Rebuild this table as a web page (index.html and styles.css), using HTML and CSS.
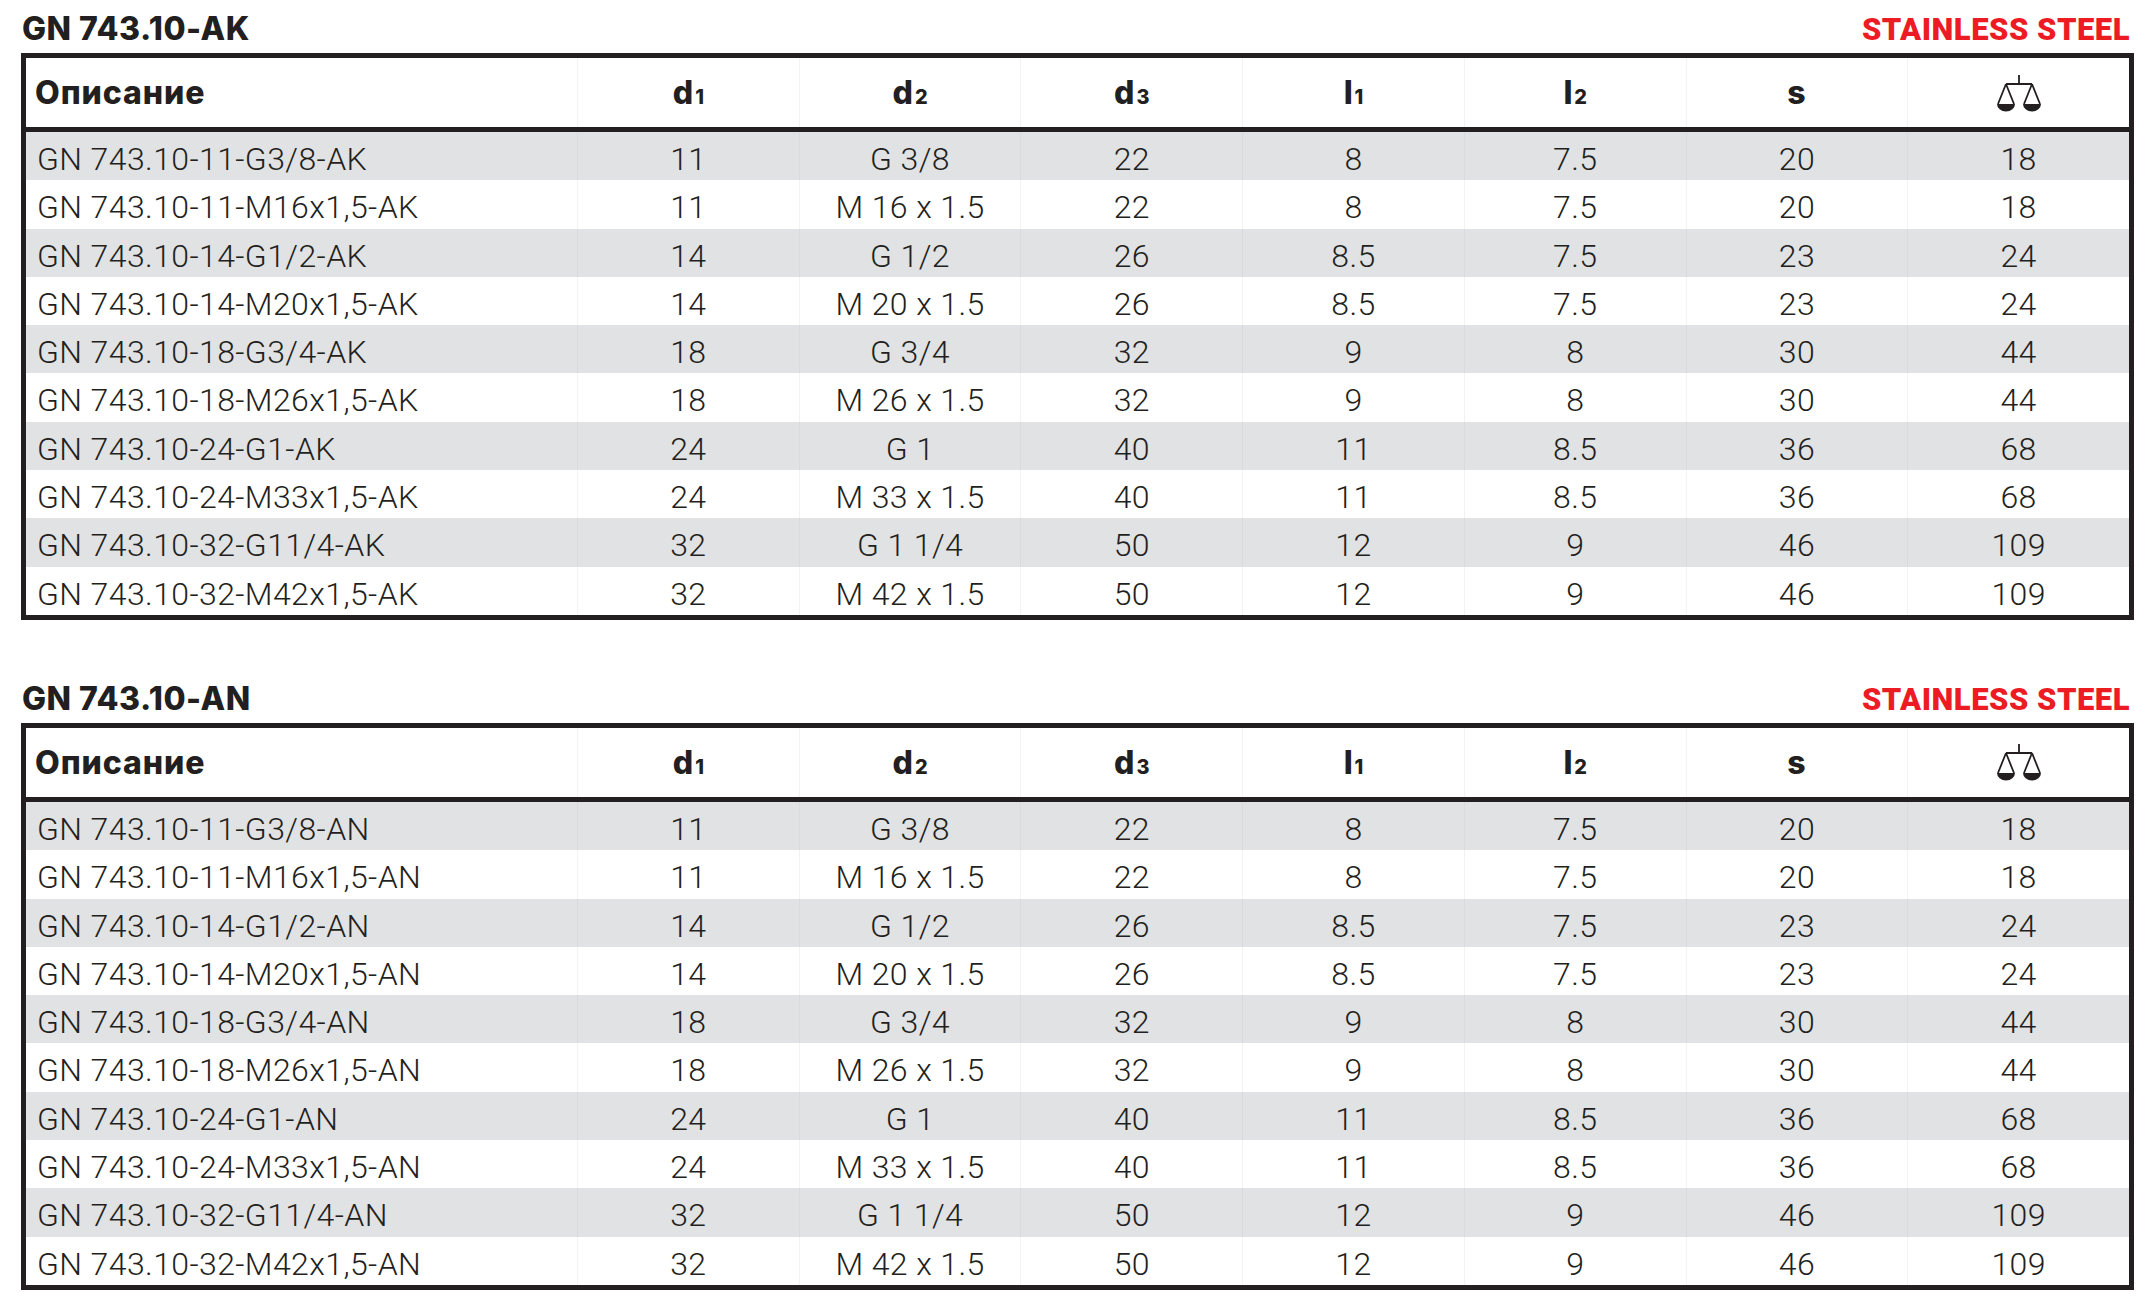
FILE: index.html
```html
<!DOCTYPE html>
<html lang="ru">
<head>
<meta charset="utf-8">
<title>GN 743.10</title>
<link rel="stylesheet" href="styles.css">
</head>
<body>
<div class="page">

<section class="section">
  <div class="sec-head">
    <h2 class="sec-title">GN 743.10-AK</h2>
    <span class="material">STAINLESS STEEL</span>
  </div>
  <div class="tbl">
    <div class="row head">
      <div class="cell first"><span class="h">Описание</span></div>
      <div class="cell"><span class="h">d<sub>1</sub></span></div>
      <div class="cell"><span class="h">d<sub>2</sub></span></div>
      <div class="cell"><span class="h">d<sub>3</sub></span></div>
      <div class="cell"><span class="h">l<sub>1</sub></span></div>
      <div class="cell"><span class="h">l<sub>2</sub></span></div>
      <div class="cell"><span class="h">s</span></div>
      <div class="cell"><svg class="scale" viewBox="0 0 44 37" width="44" height="37"><path d="M22 0V9M9 9H35M9 9L1 29M9 9L17 29M35 9L27 29M35 9L43 29" fill="none" stroke="#231f20" stroke-width="1.8"/><path d="M0 29H18A9 7.5 0 0 1 0 29Z M26 29H44A9 7.5 0 0 1 26 29Z" fill="#231f20"/></svg></div>
    </div>
    <div class="row"><div class="cell first">GN 743.10-11-G3/8-AK</div><div class="cell">11</div><div class="cell">G 3/8</div><div class="cell">22</div><div class="cell">8</div><div class="cell">7.5</div><div class="cell">20</div><div class="cell">18</div></div>
    <div class="row"><div class="cell first">GN 743.10-11-M16x1,5-AK</div><div class="cell">11</div><div class="cell">M 16 x 1.5</div><div class="cell">22</div><div class="cell">8</div><div class="cell">7.5</div><div class="cell">20</div><div class="cell">18</div></div>
    <div class="row"><div class="cell first">GN 743.10-14-G1/2-AK</div><div class="cell">14</div><div class="cell">G 1/2</div><div class="cell">26</div><div class="cell">8.5</div><div class="cell">7.5</div><div class="cell">23</div><div class="cell">24</div></div>
    <div class="row"><div class="cell first">GN 743.10-14-M20x1,5-AK</div><div class="cell">14</div><div class="cell">M 20 x 1.5</div><div class="cell">26</div><div class="cell">8.5</div><div class="cell">7.5</div><div class="cell">23</div><div class="cell">24</div></div>
    <div class="row"><div class="cell first">GN 743.10-18-G3/4-AK</div><div class="cell">18</div><div class="cell">G 3/4</div><div class="cell">32</div><div class="cell">9</div><div class="cell">8</div><div class="cell">30</div><div class="cell">44</div></div>
    <div class="row"><div class="cell first">GN 743.10-18-M26x1,5-AK</div><div class="cell">18</div><div class="cell">M 26 x 1.5</div><div class="cell">32</div><div class="cell">9</div><div class="cell">8</div><div class="cell">30</div><div class="cell">44</div></div>
    <div class="row"><div class="cell first">GN 743.10-24-G1-AK</div><div class="cell">24</div><div class="cell">G 1</div><div class="cell">40</div><div class="cell">11</div><div class="cell">8.5</div><div class="cell">36</div><div class="cell">68</div></div>
    <div class="row"><div class="cell first">GN 743.10-24-M33x1,5-AK</div><div class="cell">24</div><div class="cell">M 33 x 1.5</div><div class="cell">40</div><div class="cell">11</div><div class="cell">8.5</div><div class="cell">36</div><div class="cell">68</div></div>
    <div class="row"><div class="cell first">GN 743.10-32-G11/4-AK</div><div class="cell">32</div><div class="cell">G 1 1/4</div><div class="cell">50</div><div class="cell">12</div><div class="cell">9</div><div class="cell">46</div><div class="cell">109</div></div>
    <div class="row"><div class="cell first">GN 743.10-32-M42x1,5-AK</div><div class="cell">32</div><div class="cell">M 42 x 1.5</div><div class="cell">50</div><div class="cell">12</div><div class="cell">9</div><div class="cell">46</div><div class="cell">109</div></div>
  </div>
</section>

<section class="section">
  <div class="sec-head">
    <h2 class="sec-title">GN 743.10-AN</h2>
    <span class="material">STAINLESS STEEL</span>
  </div>
  <div class="tbl">
    <div class="row head">
      <div class="cell first"><span class="h">Описание</span></div>
      <div class="cell"><span class="h">d<sub>1</sub></span></div>
      <div class="cell"><span class="h">d<sub>2</sub></span></div>
      <div class="cell"><span class="h">d<sub>3</sub></span></div>
      <div class="cell"><span class="h">l<sub>1</sub></span></div>
      <div class="cell"><span class="h">l<sub>2</sub></span></div>
      <div class="cell"><span class="h">s</span></div>
      <div class="cell"><svg class="scale" viewBox="0 0 44 37" width="44" height="37"><path d="M22 0V9M9 9H35M9 9L1 29M9 9L17 29M35 9L27 29M35 9L43 29" fill="none" stroke="#231f20" stroke-width="1.8"/><path d="M0 29H18A9 7.5 0 0 1 0 29Z M26 29H44A9 7.5 0 0 1 26 29Z" fill="#231f20"/></svg></div>
    </div>
    <div class="row"><div class="cell first">GN 743.10-11-G3/8-AN</div><div class="cell">11</div><div class="cell">G 3/8</div><div class="cell">22</div><div class="cell">8</div><div class="cell">7.5</div><div class="cell">20</div><div class="cell">18</div></div>
    <div class="row"><div class="cell first">GN 743.10-11-M16x1,5-AN</div><div class="cell">11</div><div class="cell">M 16 x 1.5</div><div class="cell">22</div><div class="cell">8</div><div class="cell">7.5</div><div class="cell">20</div><div class="cell">18</div></div>
    <div class="row"><div class="cell first">GN 743.10-14-G1/2-AN</div><div class="cell">14</div><div class="cell">G 1/2</div><div class="cell">26</div><div class="cell">8.5</div><div class="cell">7.5</div><div class="cell">23</div><div class="cell">24</div></div>
    <div class="row"><div class="cell first">GN 743.10-14-M20x1,5-AN</div><div class="cell">14</div><div class="cell">M 20 x 1.5</div><div class="cell">26</div><div class="cell">8.5</div><div class="cell">7.5</div><div class="cell">23</div><div class="cell">24</div></div>
    <div class="row"><div class="cell first">GN 743.10-18-G3/4-AN</div><div class="cell">18</div><div class="cell">G 3/4</div><div class="cell">32</div><div class="cell">9</div><div class="cell">8</div><div class="cell">30</div><div class="cell">44</div></div>
    <div class="row"><div class="cell first">GN 743.10-18-M26x1,5-AN</div><div class="cell">18</div><div class="cell">M 26 x 1.5</div><div class="cell">32</div><div class="cell">9</div><div class="cell">8</div><div class="cell">30</div><div class="cell">44</div></div>
    <div class="row"><div class="cell first">GN 743.10-24-G1-AN</div><div class="cell">24</div><div class="cell">G 1</div><div class="cell">40</div><div class="cell">11</div><div class="cell">8.5</div><div class="cell">36</div><div class="cell">68</div></div>
    <div class="row"><div class="cell first">GN 743.10-24-M33x1,5-AN</div><div class="cell">24</div><div class="cell">M 33 x 1.5</div><div class="cell">40</div><div class="cell">11</div><div class="cell">8.5</div><div class="cell">36</div><div class="cell">68</div></div>
    <div class="row"><div class="cell first">GN 743.10-32-G11/4-AN</div><div class="cell">32</div><div class="cell">G 1 1/4</div><div class="cell">50</div><div class="cell">12</div><div class="cell">9</div><div class="cell">46</div><div class="cell">109</div></div>
    <div class="row"><div class="cell first">GN 743.10-32-M42x1,5-AN</div><div class="cell">32</div><div class="cell">M 42 x 1.5</div><div class="cell">50</div><div class="cell">12</div><div class="cell">9</div><div class="cell">46</div><div class="cell">109</div></div>
  </div>
</section>

</div>
</body>
</html>
```

FILE: styles.css
```css
html, body {
  margin: 0;
  padding: 0;
  background: #ffffff;
}

body {
  color: #231f20;
  font-family: Roboto, "Liberation Sans", sans-serif;
}

.page {
  padding-left: 21px;
  width: 2113px;
}

.section + .section {
  margin-top: 50px;
}

.sec-head {
  display: flex;
  justify-content: space-between;
  align-items: baseline;
  box-sizing: border-box;
  height: 53px;
  padding: 11px 4px 0 1px;
  line-height: 36px;
}

.sec-title {
  margin: 0;
  font-family: Inter, "Liberation Sans", sans-serif;
  font-weight: 800;
  font-size: 32px;
  letter-spacing: 0.5px;
}

.material {
  font-family: Roboto, "Liberation Sans", sans-serif;
  font-weight: 900;
  font-size: 31px;
  letter-spacing: 0.5px;
  color: #ed1c24;
}

.tbl {
  border: 5px solid #231f20;
  box-sizing: border-box;
  width: 2113px;
}

.row {
  display: grid;
  grid-template-columns: 551px repeat(7, 1fr);
  height: 48.3px;
}

.row:nth-child(even) {
  background: #e1e2e4;
}

.row.head {
  height: 74px;
  border-bottom: 5px solid #231f20;
  box-sizing: border-box;
  background: #ffffff;
}

.cell {
  box-sizing: border-box;
  padding-top: 10px;
  line-height: 34px;
  font-family: Roboto, "Liberation Sans", sans-serif;
  font-weight: 300;
  font-size: 32px;
  letter-spacing: 0.4px;
  text-align: center;
  white-space: nowrap;
  border-left: 1px solid rgba(190, 190, 195, 0.18);
}

.cell.first {
  text-align: left;
  padding-left: 11px;
  border-left: none;
}

.head .cell {
  display: flex;
  align-items: center;
  justify-content: center;
  padding-top: 1px;
}

.head .cell.first {
  justify-content: flex-start;
  padding-left: 9px;
}

.h {
  display: block;
  line-height: 1;
  font-family: Inter, "Liberation Sans", sans-serif;
  font-weight: 800;
  font-size: 32px;
  letter-spacing: 0.9px;
  white-space: nowrap;
}

.h sub {
  font-size: 0.62em;
  vertical-align: baseline;
  letter-spacing: 0;
  margin-left: 1px;
}

.scale {
  display: block;
}
```
